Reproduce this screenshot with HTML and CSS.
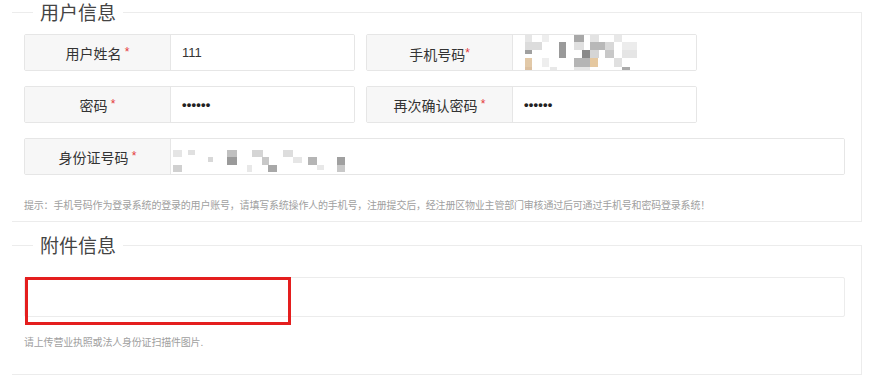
FILE: index.html
```html
<!DOCTYPE html>
<html lang="zh-CN">
<head>
<meta charset="utf-8">
<title>注册</title>
<link rel="stylesheet" href="styles.css">
</head>
<body>
<div class="page">
  <fieldset class="section section-user">
    <legend class="section-title">用户信息</legend>
    <div class="rows">
      <div class="row">
        <div class="field">
          <div class="field-label">用户姓名 <span class="req">*</span></div>
          <div class="field-value">111</div>
        </div>
        <div class="field">
          <div class="field-label">手机号码<span class="req">*</span></div>
          <div class="field-value">
            <svg class="mosaic mosaic-phone" width="116" height="38" viewBox="0 0 116 38">
              <rect x="2" y="0" width="7" height="8" fill="#e6e6e6"/>
              <rect x="19" y="0" width="7" height="8" fill="#eeeeee"/>
              <rect x="51" y="0" width="10" height="8" fill="#a8a8a8"/>
              <rect x="67" y="0" width="9" height="8" fill="#e3e3e3"/>
              <rect x="91" y="0" width="8" height="8" fill="#e8e8e8"/>
              <rect x="2" y="8" width="17" height="8" fill="#dcdcdc"/>
              <rect x="36" y="8" width="7" height="8" fill="#9a9a9a"/>
              <rect x="51" y="8" width="10" height="8" fill="#e0e0e0"/>
              <rect x="67" y="8" width="15" height="8" fill="#b8b8b8"/>
              <rect x="82" y="8" width="9" height="8" fill="#d8d8d8"/>
              <rect x="99" y="8" width="15" height="8" fill="#ececec"/>
              <rect x="2" y="16" width="7" height="4" fill="#a0a0a0"/>
              <rect x="36" y="16" width="7" height="8" fill="#999999"/>
              <rect x="59" y="16" width="8" height="8" fill="#8a8a8a"/>
              <rect x="67" y="16" width="9" height="8" fill="#d5d5d5"/>
              <rect x="82" y="16" width="9" height="8" fill="#c8c8c8"/>
              <rect x="99" y="16" width="15" height="8" fill="#e5e5e5"/>
              <rect x="2" y="24" width="7" height="9" fill="#e2c9a8"/>
              <rect x="19" y="24" width="7" height="9" fill="#eeeeee"/>
              <rect x="51" y="24" width="16" height="9" fill="#b5b5b5"/>
              <rect x="67" y="24" width="8" height="9" fill="#e5c8a0"/>
              <rect x="91" y="24" width="8" height="9" fill="#e0e0e0"/>
              <rect x="2" y="33" width="7" height="5" fill="#dcc0a0"/>
              <rect x="27" y="33" width="7" height="5" fill="#e8e8e8"/>
              <rect x="51" y="33" width="16" height="5" fill="#e6e6e6"/>
              <rect x="99" y="33" width="8" height="5" fill="#aaaaaa"/>
            </svg>
          </div>
        </div>
      </div>
      <div class="row">
        <div class="field">
          <div class="field-label">密码 <span class="req">*</span></div>
          <div class="field-value"><span class="dots">••••••</span></div>
        </div>
        <div class="field">
          <div class="field-label">再次确认密码 <span class="req">*</span></div>
          <div class="field-value"><span class="dots">••••••</span></div>
        </div>
      </div>
      <div class="row">
        <div class="field field-wide">
          <div class="field-label">身份证号码 <span class="req">*</span></div>
          <div class="field-value field-value-id">
            <svg class="mosaic mosaic-id" width="185" height="27" viewBox="0 0 185 27">
              <rect x="0" y="2" width="9" height="7" fill="#e5e5e5"/>
              <rect x="0" y="17" width="9" height="7" fill="#d0d0d0"/>
              <rect x="15" y="2" width="7" height="5" fill="#e0e0e0"/>
              <rect x="35" y="9" width="5" height="5" fill="#d8d8d8"/>
              <rect x="54" y="2" width="10" height="7" fill="#c0c0c0"/>
              <rect x="54" y="9" width="10" height="8" fill="#9a9a9a"/>
              <rect x="74" y="17" width="5" height="7" fill="#e8e8e8"/>
              <rect x="79" y="2" width="11" height="7" fill="#d5d5d5"/>
              <rect x="89" y="9" width="7" height="8" fill="#c8c8c8"/>
              <rect x="95" y="17" width="9" height="7" fill="#a8a8a8"/>
              <rect x="110" y="2" width="10" height="7" fill="#dddddd"/>
              <rect x="120" y="9" width="9" height="6" fill="#e6e6e6"/>
              <rect x="135" y="9" width="9" height="8" fill="#b5b5b5"/>
              <rect x="144" y="17" width="7" height="5" fill="#e8e8e8"/>
              <rect x="164" y="9" width="8" height="8" fill="#a0a0a0"/>
              <rect x="164" y="17" width="8" height="7" fill="#c8c8c8"/>
            </svg>
          </div>
        </div>
      </div>
    </div>
    <p class="hint hint-user">提示：手机号码作为登录系统的登录的用户账号，请填写系统操作人的手机号，注册提交后，经注册区物业主管部门审核通过后可通过手机号和密码登录系统！</p>
  </fieldset>

  <fieldset class="section section-attach">
    <legend class="section-title">附件信息</legend>
    <div class="upload">
      <div class="highlight"></div>
    </div>
    <p class="hint hint-attach">请上传营业执照或法人身份证扫描件图片.</p>
  </fieldset>
</div>
</body>
</html>
```

FILE: styles.css
```css
* {
  box-sizing: border-box;
}

html, body {
  margin: 0;
  padding: 0;
  background: #ffffff;
}

body {
  font-family: "Liberation Sans", "Noto Sans CJK SC", sans-serif;
  color: #333333;
}

.page {
  padding-left: 12px;
  padding-top: 1px;
  width: 862px;
}

.section {
  margin: 0;
  padding: 0 16px 0 12px;
  border: 1px solid #ececec;
  border-left: 0;
  min-width: 0;
}

.section-title {
  margin-left: 9px;
  padding: 0 7px;
  font-family: "Noto Sans CJK SC", sans-serif;
  font-size: 19px;
  line-height: 22px;
  font-weight: 400;
  color: #444444;
}

.section-user {
  padding-top: 11px;
  padding-bottom: 8px;
}

.section-attach {
  margin-top: 12px;
  padding-top: 21px;
  padding-bottom: 24px;
}

.rows {
  display: flex;
  flex-direction: column;
  gap: 15px;
}

.row {
  display: flex;
  gap: 11px;
}

.field {
  display: grid;
  grid-template-columns: 146px 1fr;
  width: 331px;
  height: 37px;
  border: 1px solid #e6e6e6;
  border-radius: 2px;
  overflow: hidden;
}

.field-wide {
  width: 821px;
}

.field-label {
  display: flex;
  align-items: center;
  justify-content: center;
  background: #f7f7f7;
  border-right: 1px solid #e6e6e6;
  font-family: "Noto Sans CJK SC", sans-serif;
  font-size: 14px;
  color: #333333;
  white-space: pre;
}

.req {
  color: #e4393c;
  font-size: 12px;
  font-family: "Liberation Sans", sans-serif;
  position: relative;
  top: -1px;
}

.field-value {
  display: flex;
  align-items: center;
  padding-left: 11px;
  font-size: 13px;
  color: #333333;
  background: #ffffff;
  position: relative;
}

.field-value-id {
  padding-left: 2px;
}

.mosaic {
  display: block;
}

.mosaic-phone {
  margin-left: -1px;
  align-self: flex-start;
  margin-top: -1px;
}

.mosaic-id {
  align-self: flex-start;
  margin-top: 9px;
}

.dots {
  font-size: 13px;
  letter-spacing: 0.2px;
  font-weight: 700;
  color: #222222;
}

.hint {
  margin: 0;
  font-family: "Noto Sans CJK SC", sans-serif;
  font-size: 10px;
  letter-spacing: -0.2px;
  line-height: 16px;
  color: #a0a0a0;
}

.hint-user {
  margin-top: 22px;
}

.hint-attach {
  margin-top: 17px;
}

.upload {
  position: relative;
  height: 40px;
  border: 1px solid #ececec;
  border-radius: 2px;
}

.highlight {
  position: absolute;
  left: 0;
  top: -1px;
  width: 266px;
  height: 48px;
  border: 3px solid #e41e1e;
}
```
